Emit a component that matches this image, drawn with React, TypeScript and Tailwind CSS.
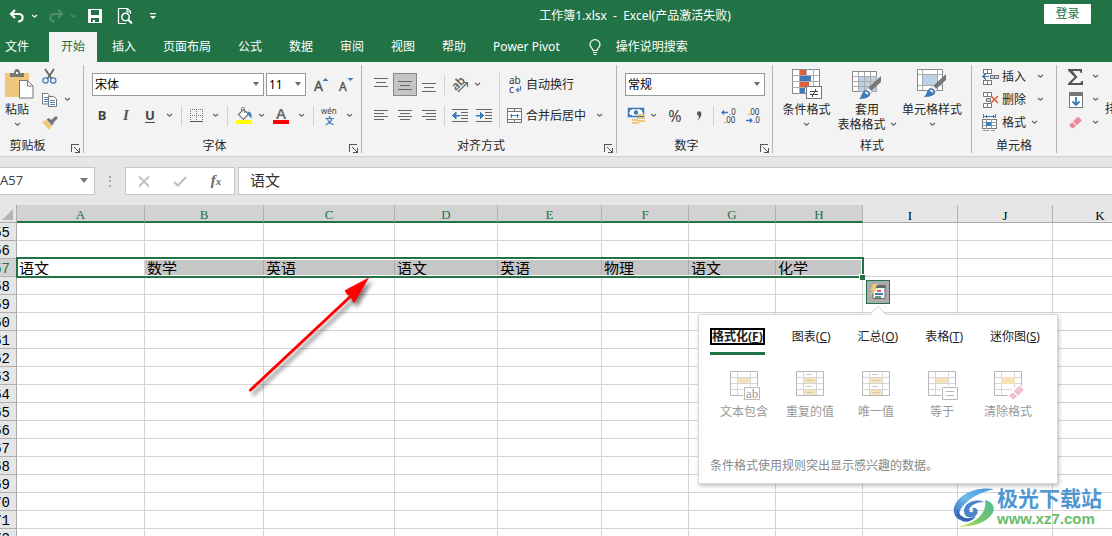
import React from "react";

type Kids = { children?: React.ReactNode };

/* ---------- small building blocks ---------- */

function Svg({ w, h, children, crisp = false }: Kids & { w: number; h: number; crisp?: boolean }) {
  return (
    <svg
      width={w}
      height={h}
      viewBox={`0 0 ${w} ${h}`}
      fill="none"
      className="shrink-0 overflow-visible"
      aria-hidden="true"
      shapeRendering={crisp ? "crispEdges" : "auto"}
    >
      {children}
    </svg>
  );
}

function Chevron() {
  return (
    <Svg w={7} h={5}>
      <path d="M1 1l2.500 2.300L6 1" stroke="#666" strokeWidth="1.200" />
    </Svg>
  );
}

function Tool({ label, className = "w-6", children }: Kids & { label: string; className?: string }) {
  return (
    <button type="button" aria-label={label} className={`flex h-[23px] shrink-0 items-center justify-center ${className}`}>
      {children}
    </button>
  );
}

function Divider() {
  return <span className="h-5 w-px shrink-0 bg-[#d0d0d0]" />;
}

function Combo({ label, value, className }: { label: string; value: string; className: string }) {
  return (
    <div className={`relative h-[23px] shrink-0 border border-[#999] bg-white ${className}`}>
      <select aria-label={label} defaultValue={value} className="h-full w-full appearance-none bg-transparent pl-[2px] leading-5 text-black outline-none">
        <option>{value}</option>
      </select>
      <span className="pointer-events-none absolute right-1 top-2">
        <Svg w={6} h={4}>
          <path d="M0 0h6L3 4z" fill="#666" />
        </Svg>
      </span>
    </div>
  );
}

function Group({
  title,
  className,
  labelPad = "pr-4",
  launcher = true,
  children,
}: Kids & { title: string; className: string; labelPad?: string; launcher?: boolean }) {
  return (
    <section aria-label={title} className={`flex shrink-0 flex-col border-r border-[#b5b5b5] ${className}`}>
      <div className="h-[74px]">{children}</div>
      <div className={`relative flex h-[14px] items-center justify-center leading-[14px] ${labelPad}`}>
        {title}
        {launcher && (
          <button type="button" aria-label={`${title}设置`} className="absolute bottom-0 right-[3px]">
            <Svg w={9} h={9} crisp>
              <path d="M0.5 8V0.5H8M3 3l5 5M8.500 4v4.500H4" stroke="#555" />
            </Svg>
          </button>
        )}
      </div>
    </section>
  );
}

/* ---------- ribbon icons ---------- */

const PasteIcon = () => (
  <Svg w={29} h={30}>
    <path d="M0 4h24v24H0z" fill="#eec67c" />
    <path d="M5 4h4c0-2 1-4 3-4s3 2 3 4h4v4H5z" fill="#777" />
    <path d="M11 3h2v2h-2z" fill="#f3f3f3" />
    <path d="M14.500 11.500h8l5.500 5.500v12H14.500z" fill="#fff" stroke="#777" />
    <path d="M22.500 11.500V17H28" stroke="#777" />
  </Svg>
);

const CutIcon = () => (
  <Svg w={15} h={15}>
    <path d="M3 0l6.500 9.500M12 0L5.500 9.500" stroke="#666" strokeWidth="1.800" />
    <circle cx="3.500" cy="11.500" r="2.700" stroke="#4a7ebb" strokeWidth="1.300" />
    <circle cx="11.200" cy="11.500" r="2.700" stroke="#4a7ebb" strokeWidth="1.300" />
  </Svg>
);

const CopyIcon = () => (
  <Svg w={15} h={14}>
    <path d="M.5.5h5l2.500 2.500v8H.5z" fill="#fff" stroke="#777" />
    <path d="M2 4.500h4M2 6.500h4M2 8.500h4" stroke="#4a7ebb" />
    <path d="M6.500 3.500h5L14.500 6v7.500h-8z" fill="#fff" stroke="#777" />
    <path d="M8 7.500h5M8 9.500h5M8 11.500h5" stroke="#4a7ebb" />
  </Svg>
);

const BrushIcon = () => (
  <Svg w={16} h={14}>
    <path d="M0 6l4-2 6 6-3 4z" fill="#eec67c" />
    <path d="M4.500 3.500L7 2l5 5-2 2.500z" fill="#777" />
    <path d="M8.500 4.500L14 0l2 2-5 5z" fill="#777" />
  </Svg>
);

const GrowFont = ({ down = false }: { down?: boolean }) => (
  <Svg w={15} h={17}>
    <text x="0" y="15" fontFamily="Noto Sans" fontSize={down ? 12 : 14} fill="#555" stroke="#555" strokeWidth=".4">
      A
    </text>
    <path d={down ? "M8.500 2h6l-3 3z" : "M8.500 5h6l-3-3z"} fill="#3f7ab8" />
  </Svg>
);

const BorderIcon = () => (
  <Svg w={13} h={14} crisp>
    <path d="M0 .5h13M0 6.500h13M.5 0v12M6.500 0v12M12.500 0v12" stroke="#777" strokeDasharray="1 1" />
    <path d="M0 12.500h13" stroke="#555" />
  </Svg>
);

const FillIcon = () => (
  <Svg w={16} h={17}>
    <path d="M2.500 7.500l5-5 5 4.500-5 5.500z" fill="#fff" stroke="#777" strokeWidth="1.200" />
    <path d="M5.500 5V1.500c0-1.500 3-1.500 3 0V6" stroke="#777" />
    <path d="M11.500 4.500c4 0 4.500 3 4 7-1.500-1-2-3-4-3.500z" fill="#4a7ebb" />
    <path d="M0 13h16v4H0z" fill="#ff0" />
  </Svg>
);

const FontColorIcon = () => (
  <Svg w={16} h={17}>
    <text x="3" y="12" fontFamily="Noto Sans" fontSize="15" fontWeight="600" fill="#666">
      A
    </text>
    <path d="M0 13h16v4H0z" fill="#f00" />
  </Svg>
);

const PinyinIcon = () => (
  <Svg w={17} h={18}>
    <text x="0" y="7" fontFamily="Noto Sans" fontSize="8" fill="#444">
      wén
    </text>
    <text x="4" y="17" fontFamily="Noto Sans CJK SC" fontSize="9" fontWeight="700" fill="#3f7ab8">
      文
    </text>
  </Svg>
);

function Lines({ rows }: { rows: [number, number, number][] }) {
  return (
    <Svg w={14} h={14} crisp>
      {rows.map(([x, y, len]) => (
        <path key={y} d={`M${x} ${y}.5h${len}`} stroke="#666" />
      ))}
    </Svg>
  );
}

const OrientIcon = () => (
  <Svg w={17} h={16}>
    <text x="0" y="11" fontFamily="Noto Sans" fontSize="12" fontWeight="600" fill="#666" transform="rotate(-45 6 8)">
      ab
    </text>
    <path d="M6 15l9-9M11 5.500h4.500V10" stroke="#666" strokeWidth="1.200" />
  </Svg>
);

const IndentIcon = ({ right = false }: { right?: boolean }) => (
  <Svg w={16} h={13} crisp>
    <path d="M0 .5h16M9 3.500h7M9 6.500h7M9 9.500h7M0 12.500h16" stroke="#666" />
    <path d={right ? "M0 6h4V3l4 3.500L4 10V7H0z" : "M8 6H4V3L0 6.500 4 10V7h4z"} fill="#3f7ab8" stroke="#3f7ab8" strokeWidth=".5" />
  </Svg>
);

const WrapIcon = () => (
  <Svg w={12} h={18}>
    <text x="0" y="8" fontFamily="Noto Sans" fontSize="10" fill="#333">
      ab
    </text>
    <text x="0" y="17" fontFamily="Noto Sans" fontSize="10" fill="#333">
      c
    </text>
    <path d="M11.500 10v4H7.500M9.500 12l-2 2 2 2" stroke="#3f7ab8" strokeWidth="1.200" />
  </Svg>
);

const MergeIcon = () => (
  <Svg w={15} h={15} crisp>
    <path d="M.5.5h14v14H.5zM0 3.500h15M0 11.500h15M7.500 0v4M7.500 11v4" stroke="#777" />
    <path d="M1 4h13v7H1z" fill="#fff" />
    <path d="M3 7.500h9M4.500 5.500v4M10.500 5.500v4" stroke="#3f7ab8" />
  </Svg>
);

const MoneyIcon = () => (
  <Svg w={18} h={17}>
    <path d="M.5 1.500h15v8H.5z" fill="#fff" stroke="#3f7ab8" strokeWidth="1.500" />
    <path d="M0 1h4v2H2v2H0zM12 1h4v4h-2V3h-2zM0 7h2v1h2v2H0z" fill="#3f7ab8" />
    <circle cx="8" cy="5.500" r="2.200" fill="#3f7ab8" />
    <path d="M10 7h7v2h-7zM9 10h8v2H9zM4 12h6v2H4zM10 13h7v2h-7zM4 15h7v2H4z" fill="#eec67c" />
  </Svg>
);

const DecimalIcon = ({ less = false }: { less?: boolean }) => (
  <Svg w={15} h={16}>
    <text x={less ? 2 : 7} y="7" fontFamily="Noto Sans" fontSize="8" fill="#333">
      {less ? ".00" : ".0"}
    </text>
    <text x={less ? 7 : 2} y="15" fontFamily="Noto Sans" fontSize="8" fill="#333">
      {less ? ".0" : ".00"}
    </text>
    <path d={less ? "M0 12.500h6M4 10.500l2 2-2 2" : "M6 4.500H0M2 2.500l-2 2 2 2"} stroke="#3f7ab8" strokeWidth="1.300" />
  </Svg>
);

const CondIcon = () => (
  <Svg w={30} h={31} crisp>
    <path d="M.5.5h27v24H.5z" fill="#fff" stroke="#888" />
    <path d="M0 6.500h27M0 12.500h27M0 18.500h27M7.500 0v25M14.500 0v25M21.500 0v25" stroke="#aaa" />
    <path d="M8 1h6v5H8zM8 13h9v5H8z" fill="#e0603c" />
    <path d="M8 7h11v5H8zM8 19h5v5H8z" fill="#3f7ab8" />
    <path d="M14.500 17.500h15v12h-15z" fill="#fff" stroke="#777" />
    <path d="M18 22.500h8M18 25.500h8M24 20l-4 8" stroke="#444" />
  </Svg>
);

const StyleBrush = () => (
  <>
    <path d="M29 5v6L19 20l-3-3z" fill="#777" />
    <path d="M16 16.500l4 4-2 2.500-4.500-3.500z" fill="#fff" stroke="#999" strokeWidth=".6" />
    <path d="M12.500 19.500c3.500-1 6 1.500 5.500 4.500-1.500 3.500-7 4-11 4 2.500-1.500 2.500-6.500 5.500-8.500z" fill="#3f7ab8" />
    <path d="M13 21.500c1.500-.3 2.700.8 2.500 2" stroke="#fff" strokeWidth="1.500" />
  </>
);

const TableStyleIcon = () => (
  <Svg w={30} h={29}>
    <path d="M.5.500h24v20H.5z" fill="#fff" stroke="#888" />
    <path d="M7 5h17.500v15.500H7z" fill="#bcd0e8" />
    <path d="M.5 5.500h24M.5 10.500h24M.5 15.500h24M6.500.5v20M12.500.5v20M18.500.5v20" stroke="#aaa" />
    <StyleBrush />
  </Svg>
);

const CellStyleIcon = () => (
  <Svg w={30} h={29}>
    <path d="M.5.500h25v21H.5z" fill="#fff" stroke="#888" />
    <path d="M6 6h14v10H6z" fill="#bcd0e8" />
    <path d="M.5 5.500h25M.5 16.500h25M5.500.5v21M20.500.5v21" stroke="#aaa" />
    <StyleBrush />
  </Svg>
);

const InsertIcon = () => (
  <Svg w={17} h={16} crisp>
    <path d="M1.500.5h8v4h-8zM5.500.5v4M1.500 11.500h8v4h-8zM5.500 11.500v4" fill="#fff" stroke="#777" />
    <path d="M8.500 6.500h8v3h-8zM12.500 6.500v3" fill="#bcd0e8" stroke="#777" />
    <path d="M7 7.500H1M4 5L1 7.500 4 10" stroke="#3f7ab8" strokeWidth="1.500" />
  </Svg>
);

const DeleteIcon = () => (
  <Svg w={17} h={16}>
    <path d="M1.500.5h8v4h-8zM5.500.5v4M1.500 11.500h8v4h-8zM5.500 11.500v4" fill="#fff" stroke="#777" />
    <path d="M4.500 6.500h4v3h-4z" fill="#bcd0e8" stroke="#777" />
    <path d="M9 4l7 7M16 4l-7 7" stroke="#e0603c" strokeWidth="1.700" />
  </Svg>
);

const FormatIcon = () => (
  <Svg w={16} h={17} crisp>
    <path d="M1.500 0v4M13.500 0v4M2 2.500h11M4 1v3M11 1v3" stroke="#3f7ab8" />
    <path d="M.5 5.500h14v9H.5z" fill="#fff" stroke="#777" />
    <path d="M0 8.500h15M0 11.500h15M4.500 5v10M9.500 5v10M1 16.500h6M9 16.500h4" stroke="#999" />
    <path d="M4 8h5v4H4z" fill="#3f7ab8" />
  </Svg>
);

const EraserShape = ({ color }: { color: string }) => (
  <>
    <path d="M4 5.500L9 .700l4 3.600-5 5z" fill={color} />
    <path d="M3.200 6.300L0 9.300 3.500 12.500l3.800-2.600z" fill={color} />
  </>
);

/* ---------- ribbon ---------- */

function ClipboardGroup() {
  return (
    <Group title="剪贴板" className="w-[84px]" labelPad="pr-7">
      <div className="flex">
        <button type="button" className="flex w-[38px] flex-col items-center pt-1">
          <PasteIcon />
          <span className="mr-1 pt-[3px] leading-4">粘贴</span>
          <span className="mr-1 flex h-3 items-center">
            <Chevron />
          </span>
        </button>
        <div className="flex flex-col">
          <Tool label="剪切" className="w-[22px]">
            <CutIcon />
          </Tool>
          <div className="flex">
            <Tool label="复制" className="w-[22px]">
              <CopyIcon />
            </Tool>
            <Tool label="复制选项" className="w-[14px]">
              <Chevron />
            </Tool>
          </div>
          <Tool label="格式刷" className="w-[24px]">
            <BrushIcon />
          </Tool>
        </div>
      </div>
    </Group>
  );
}

function FontGroup() {
  return (
    <Group title="字体" className="w-[278px]">
      <div className="flex flex-col gap-2 pl-2 pt-2">
        <div className="flex items-center">
          <Combo label="字体" value="宋体" className="w-[172px]" />
          <span className="w-[2px]" />
          <Combo label="字号" value="11" className="w-10" />
          <Tool label="增大字号" className="w-[31px]">
            <GrowFont />
          </Tool>
          <Tool label="减小字号" className="w-[18px]">
            <GrowFont down />
          </Tool>
        </div>
        <div className="flex items-center">
          <Tool label="加粗" className="w-5">
            <b className="text-[13px] text-[#444]">B</b>
          </Tool>
          <Tool label="倾斜" className="w-7">
            <i className="font-['Liberation_Serif',serif] text-[15px] font-bold text-[#555]">I</i>
          </Tool>
          <Tool label="下划线" className="w-5">
            <b className="text-[13px] text-[#444] underline underline-offset-2">U</b>
          </Tool>
          <Tool label="下划线选项" className="w-[18px]">
            <Chevron />
          </Tool>
          <span className="w-[3px]" />
          <Divider />
          <Tool label="边框" className="w-[29px]">
            <BorderIcon />
          </Tool>
          <Tool label="边框选项" className="w-2">
            <Chevron />
          </Tool>
          <span className="w-2" />
          <Divider />
          <Tool label="填充颜色" className="w-[31px]">
            <FillIcon />
          </Tool>
          <Tool label="填充颜色选项" className="w-1">
            <Chevron />
          </Tool>
          <Tool label="字体颜色" className="w-9">
            <FontColorIcon />
          </Tool>
          <Tool label="字体颜色选项" className="w-1">
            <Chevron />
          </Tool>
          <span className="w-[10px]" />
          <Divider />
          <Tool label="拼音" className="w-[31px]">
            <PinyinIcon />
          </Tool>
          <Tool label="拼音选项" className="w-2">
            <Chevron />
          </Tool>
        </div>
      </div>
    </Group>
  );
}

function AlignGroup() {
  return (
    <Group title="对齐方式" className="w-[255px]">
      <div className="flex pt-2">
        <div className="flex flex-col gap-2 pl-[7px]">
          <div className="flex">
            <Tool label="顶端对齐">
              <Lines rows={[[0, 0, 14], [2, 4, 10], [0, 8, 14]]} />
            </Tool>
            <Tool label="垂直居中" className="w-6 border border-[#888] bg-[#c5c5c5]">
              <Lines rows={[[0, 3, 14], [2, 7, 10], [0, 11, 14]]} />
            </Tool>
            <Tool label="底端对齐">
              <Lines rows={[[0, 5, 14], [2, 9, 10], [0, 13, 14]]} />
            </Tool>
          </div>
          <div className="flex">
            <Tool label="左对齐">
              <Lines rows={[[0, 1, 14], [0, 4, 10], [0, 7, 14], [0, 10, 10]]} />
            </Tool>
            <Tool label="居中">
              <Lines rows={[[0, 1, 14], [2, 4, 10], [0, 7, 14], [2, 10, 10]]} />
            </Tool>
            <Tool label="右对齐">
              <Lines rows={[[0, 1, 14], [4, 4, 10], [0, 7, 14], [4, 10, 10]]} />
            </Tool>
          </div>
        </div>
        <div className="ml-[3px] flex w-[55px] flex-col gap-2">
          <div className="flex items-center">
            <Divider />
            <Tool label="方向" className="w-[30px]">
              <OrientIcon />
            </Tool>
            <Tool label="方向选项" className="w-1">
              <Chevron />
            </Tool>
          </div>
          <div className="flex items-center">
            <Divider />
            <Tool label="减少缩进量" className="w-[30px]">
              <IndentIcon />
            </Tool>
            <Tool label="增加缩进量" className="w-[18px]">
              <IndentIcon right />
            </Tool>
          </div>
        </div>
        <span className="h-[55px] w-px bg-[#d0d0d0]" />
        <div className="flex flex-col gap-2 pl-[7px]">
          <button type="button" className="flex h-[23px] items-center gap-[5px] pl-[2px]">
            <WrapIcon />
            自动换行
          </button>
          <button type="button" className="flex h-[23px] items-center gap-1">
            <MergeIcon />
            合并后居中
            <span className="pl-[6px]">
              <Chevron />
            </span>
          </button>
        </div>
      </div>
    </Group>
  );
}

function NumberGroup() {
  return (
    <Group title="数字" className="w-[156px]">
      <div className="flex flex-col gap-2 pl-2 pt-2">
        <Combo label="数字格式" value="常规" className="w-[140px]" />
        <div className="flex items-center">
          <Tool label="会计数字格式" className="w-[24px]">
            <MoneyIcon />
          </Tool>
          <Tool label="会计数字格式选项" className="w-2">
            <Chevron />
          </Tool>
          <Tool label="百分比样式" className="w-[36px]">
            <span className="text-base text-[#444]">%</span>
          </Tool>
          <Tool label="千位分隔样式" className="w-3">
            <Svg w={6} h={10}>
              <path d="M1 2.500a2.200 2.200 0 1 1 4.400 0C5.400 6 3.500 8 1 9.500c1-1.500 2-2.500 2-4.600A2.300 2.300 0 0 1 1 2.500z" fill="#555" />
            </Svg>
          </Tool>
          <span className="w-2" />
          <Divider />
          <Tool label="增加小数位数" className="w-[30px]">
            <DecimalIcon />
          </Tool>
          <Tool label="减少小数位数" className="w-[18px]">
            <DecimalIcon less />
          </Tool>
        </div>
      </div>
    </Group>
  );
}

function StylesGroup() {
  return (
    <Group title="样式" className="w-[199px]" labelPad="pr-0" launcher={false}>
      <div className="flex pl-[5px] pt-1 leading-[15px]">
        <button type="button" className="flex w-[57px] flex-col items-center">
          <CondIcon />
          <span className="mt-[2px]">条件格式</span>
          <span className="flex h-[15px] items-center">
            <Chevron />
          </span>
        </button>
        <button type="button" className="flex w-[64px] flex-col items-center pt-[2px]">
          <TableStyleIcon />
          <span className="mt-[2px]">套用</span>
          <span className="flex items-center gap-1 whitespace-nowrap">
            表格格式
            <Chevron />
          </span>
        </button>
        <button type="button" className="flex w-[66px] flex-col items-center">
          <CellStyleIcon />
          <span className="mt-1">单元格样式</span>
          <span className="flex h-[15px] items-center">
            <Chevron />
          </span>
        </button>
      </div>
    </Group>
  );
}

function CellsGroup() {
  const rows = [
    { name: "插入", icon: <InsertIcon />, gap: "pl-[11px]" },
    { name: "删除", icon: <DeleteIcon />, gap: "pl-[11px]" },
    { name: "格式", icon: <FormatIcon />, gap: "pl-[5px]" },
  ];
  return (
    <Group title="单元格" className="w-[85px]" labelPad="pr-0" launcher={false}>
      <div className="flex flex-col pl-[10px]">
        {rows.map((r) => (
          <button key={r.name} type="button" className="flex h-[23px] items-center">
            <span className="flex w-5 items-center">{r.icon}</span>
            {r.name}
            <span className={r.gap}>
              <Chevron />
            </span>
          </button>
        ))}
      </div>
    </Group>
  );
}

function EditGroup() {
  return (
    <section aria-label="编辑" className="flex shrink-0 items-start pl-[9px]">
      <div className="flex w-[33px] flex-col">
        <button type="button" aria-label="自动求和" className="flex h-[23px] items-center justify-between pl-[2px]">
          <Svg w={15} h={16}>
            <path d="M0 0h14v4h-1.500c0-1.500-.5-2-2-2H4.500L9.500 8l-6 6h7.500c1.500 0 2-.5 2.500-2H15v4H0v-1.500L6.500 8 0 1.500z" fill="#555" />
          </Svg>
          <Chevron />
        </button>
        <button type="button" aria-label="填充" className="flex h-[23px] items-center justify-between pl-[3px]">
          <Svg w={14} h={16} crisp>
            <path d="M.5.500h13v15H.5z" fill="#fff" stroke="#777" />
            <path d="M0 0h14v4H0z" fill="#777" />
            <path d="M7 5v8M3.500 9.500L7 13l3.500-3.500" stroke="#3f7ab8" strokeWidth="1.800" shapeRendering="auto" />
          </Svg>
          <Chevron />
        </button>
        <button type="button" aria-label="清除" className="flex h-[23px] items-center justify-between pl-[3px]">
          <Svg w={14} h={13}>
            <EraserShape color="#e8899b" />
          </Svg>
          <Chevron />
        </button>
      </div>
      <button type="button" className="ml-[6px] whitespace-nowrap pt-9 leading-4">
        排序和筛选
      </button>
    </section>
  );
}

/* ---------- title bar and tabs ---------- */

function TitleBar() {
  return (
    <div className="flex h-8 text-white">
      <div className="flex w-[158px] shrink-0 items-center pl-[9px]">
        <button type="button" aria-label="撤消" className="flex items-center gap-[6px]">
          <Svg w={16} h={14}>
            <path d="M6 1L2 5l4 4M2.500 5H10c5 0 5 7.500-1 7.500" stroke="#fff" strokeWidth="2.200" />
          </Svg>
          <Svg w={7} h={5}>
            <path d="M1 1l2.500 2L6 1" stroke="#fff" strokeWidth="1.200" />
          </Svg>
        </button>
        <button type="button" aria-label="恢复" disabled className="ml-[10px] flex items-center gap-[6px]">
          <Svg w={16} h={14}>
            <path d="M10 1l4 4-4 4M13.500 5H6C1 5 1 12.500 7 12.500" stroke="#4d9069" strokeWidth="2" />
          </Svg>
          <Svg w={7} h={5}>
            <path d="M1 1l2.500 2L6 1" stroke="#4d9069" strokeWidth="1.200" />
          </Svg>
        </button>
        <button type="button" aria-label="保存" className="ml-[11px]">
          <Svg w={14} h={14} crisp>
            <path d="M0 0h14v14H0z" fill="#fff" />
            <path d="M3 1h8v5H3zM3 9h8v4H3z" fill="#217346" />
            <path d="M5 11h2v2H5z" fill="#fff" />
          </Svg>
        </button>
        <button type="button" aria-label="打印预览" className="ml-4">
          <Svg w={15} h={16}>
            <path d="M12.500 6V3.500l-3-3H.5v15H8M9 .5V4h3.500" stroke="#fff" strokeWidth="1.200" />
            <circle cx="7.500" cy="9" r="3.700" stroke="#fff" strokeWidth="1.500" />
            <path d="M10 11.500l4 4" stroke="#fff" strokeWidth="2" />
          </Svg>
        </button>
        <button type="button" aria-label="自定义快速访问工具栏" className="ml-[17px]">
          <Svg w={6} h={7}>
            <path d="M0 0h6v1.200H0zM0 3h6L3 6z" fill="#fff" />
          </Svg>
        </button>
      </div>
      <div className="grid flex-1 grid-cols-[1fr_auto_1fr] items-center">
        <span />
        <h1 className="whitespace-pre">{"工作簿1.xlsx  -  Excel(产品激活失败)"}</h1>
        <button type="button" className="mb-1 mr-[21px] h-5 w-[47px] justify-self-end rounded-[1px] bg-white leading-5 text-[#217346]">
          登录
        </button>
      </div>
    </div>
  );
}

const tabs = ["插入", "页面布局", "公式", "数据", "审阅", "视图", "帮助", "Power Pivot"];

function RibbonTabs() {
  return (
    <nav className="flex h-[30px] items-stretch gap-[3px] whitespace-nowrap text-white">
      <button type="button" className="w-[46px] pr-3 leading-[28px]">
        文件
      </button>
      <button type="button" aria-current="page" className="w-12 bg-[#f3f3f3] leading-[28px] text-[#217346]">
        开始
      </button>
      {tabs.map((t) => (
        <button key={t} type="button" className="px-3 leading-[28px]">
          {t}
        </button>
      ))}
      <button type="button" className="ml-[14px] flex items-center gap-[15px] leading-[28px]">
        <Svg w={12} h={16}>
          <path d="M4 11.500C4 9.500 1 8.500 1 5.500a5 4.800 0 0 1 10 0C11 8.500 8 9.500 8 11.500zM4 13.500h4M4.500 15.500h3" stroke="#fff" strokeWidth="1.200" />
        </Svg>
        操作说明搜索
      </button>
    </nav>
  );
}

/* ---------- formula bar ---------- */

function FormulaBar() {
  return (
    <div className="flex h-12 shrink-0 items-center bg-[#e6e6e6]">
      <div className="relative flex h-7 w-[95px] items-center border border-l-0 border-[#c6c6c6] bg-white">
        <input aria-label="名称框" defaultValue="A57" className="w-full bg-transparent text-[13px] text-[#444] outline-none" />
        <span className="absolute right-[6px] top-[10px]">
          <Svg w={8} h={5}>
            <path d="M0 0h8L4 5z" fill="#777" />
          </Svg>
        </span>
      </div>
      <div className="flex w-[30px] justify-center">
        <Svg w={2} h={11} crisp>
          <path d="M0 0h2v2H0zM0 4h2v2H0zM0 9h2v2H0z" fill="#a5a5a5" />
        </Svg>
      </div>
      <div className="flex h-7 w-[110px] items-center border border-[#c6c6c6] bg-white">
        <Tool label="取消" className="w-9">
          <Svg w={12} h={11}>
            <path d="M1 .5l10 10M11 .5l-10 10" stroke="#c0c0c0" strokeWidth="1.800" />
          </Svg>
        </Tool>
        <Tool label="输入" className="w-9">
          <Svg w={14} h={11}>
            <path d="M1 6l4 3.500L13 1" stroke="#c0c0c0" strokeWidth="2.200" />
          </Svg>
        </Tool>
        <Tool label="插入函数" className="w-9">
          <i className="font-['Liberation_Serif',serif] text-[15px] font-bold text-[#666]">
            f<span className="text-[11px]">x</span>
          </i>
        </Tool>
      </div>
      <input
        aria-label="编辑栏"
        defaultValue="语文"
        className="ml-[3px] h-7 min-w-0 flex-1 border border-r-0 border-[#c6c6c6] bg-white pb-1 pl-[11px] text-[15px] text-[#333] outline-none"
      />
    </div>
  );
}

/* ---------- worksheet ---------- */

const columns = [
  { name: "A", width: "w-[128px]", value: "语文" },
  { name: "B", width: "w-[119px]", value: "数学" },
  { name: "C", width: "w-[131px]", value: "英语" },
  { name: "D", width: "w-[103px]", value: "语文" },
  { name: "E", width: "w-[104px]", value: "英语" },
  { name: "F", width: "w-[87px]", value: "物理" },
  { name: "G", width: "w-[87px]", value: "语文" },
  { name: "H", width: "w-[87px]", value: "化学" },
  { name: "I", width: "w-[95px]", value: "" },
  { name: "J", width: "w-[95px]", value: "" },
  { name: "K", width: "w-[95px]", value: "" },
];
const SELECTED_ROW = 57;
const rowNumbers = Array.from({ length: 18 }, (_, i) => 55 + i);

function Sheet() {
  return (
    <table className="w-[1148px] table-fixed border-separate border-spacing-0 text-[15px] text-black">
      <colgroup>
        <col className="w-[17px]" />
        {columns.map((c) => (
          <col key={c.name} className={c.width} />
        ))}
      </colgroup>
      <thead>
        <tr className="h-[18px] font-['Liberation_Serif',serif] text-[13px] leading-[13px]">
          <td className="border-b border-r border-[#ababab] bg-[#e6e6e6] p-0">
            <svg width="11" height="11" viewBox="0 0 11 11" className="ml-[2px] mt-[2px] block" aria-hidden="true">
              <path d="M11 0v11H0z" fill="#b5b5b5" />
            </svg>
          </td>
          {columns.map((c) => (
            <th
              key={c.name}
              scope="col"
              className={
                c.value
                  ? "border-b-2 border-r border-b-[#217346] border-r-[#b0b0b0] bg-[#d2d2d2] p-0 pt-[3px] font-normal text-[#217346]"
                  : "border-b border-r border-b-[#ababab] border-r-[#b0b0b0] bg-[#e6e6e6] p-0 pt-[3px] font-normal"
              }
            >
              {c.name}
            </th>
          ))}
        </tr>
      </thead>
      <tbody>
        {rowNumbers.map((n) => {
          const selected = n === SELECTED_ROW;
          return (
            <tr key={n} className="h-[18px] leading-[17px]">
              <th
                scope="row"
                className={
                  selected
                    ? "border-b border-r border-b-[#b0b0b0] border-r-[#ababab] bg-[#d2d2d2] p-0 font-normal text-[#217346]"
                    : "border-b border-r border-b-[#b0b0b0] border-r-[#ababab] bg-[#e6e6e6] p-0 font-normal"
                }
              >
                <div className="flex h-[17px] justify-end overflow-hidden pr-[6px] font-['Liberation_Mono',monospace] text-[14px] leading-[20px]">
                  {n}
                </div>
              </th>
              {columns.map((c) => (
                <td
                  key={c.name}
                  className={
                    selected && c.value && c.name !== "A"
                      ? "border-b border-r border-b-[#d4d4d4] border-r-[#a9a9a9] bg-[#c6c6c6] p-0 pl-[2px]"
                      : "border-b border-r border-[#d4d4d4] bg-white p-0 pl-[2px]"
                  }
                >
                  {selected && c.value ? <div className="h-[17px] leading-[18px]">{c.value}</div> : null}
                </td>
              ))}
            </tr>
          );
        })}
      </tbody>
    </table>
  );
}

/* ---------- quick analysis ---------- */

function PreviewTable({ fills }: { fills: string }) {
  return (
    <>
      <path d="M.5.500h27v24H.5z" fill="#fff" stroke="#b8b8b8" />
      <path d="M1 6.500h26M1 12.500h26M1 18.500h26M7.500 1v23M20.500 1v23" stroke="#d6d6d6" />
      <path d={fills} fill="#f6e3b8" />
    </>
  );
}

const actions = [
  {
    name: "文本包含",
    icon: (
      <Svg w={28} h={30}>
        <PreviewTable fills="M8 7h12v5H8z" />
        <path d="M13 15h17v15H13z" fill="#fff" />
        <path d="M14.500 16.500h15v12h-15z" fill="#fff" stroke="#b8b8b8" />
        <text x="16" y="27" fontFamily="Liberation Serif" fontSize="13" fill="#999">
          ab
        </text>
      </Svg>
    ),
  },
  {
    name: "重复的值",
    icon: (
      <Svg w={28} h={30}>
        <PreviewTable fills="M8 7h12v5H8zM8 19h12v5H8z" />
        <path d="M10 3.500h6M10 9.500h7M10 15.500h6M10 21.500h7" stroke="#cfc9b8" />
      </Svg>
    ),
  },
  {
    name: "唯一值",
    icon: (
      <Svg w={28} h={30}>
        <PreviewTable fills="M8 7h12v5H8zM8 19h12v5H8z" />
        <path d="M10 3.500h6M10 9.500h7M10 15.500h6M10 21.500h7" stroke="#cfc9b8" />
      </Svg>
    ),
  },
  {
    name: "等于",
    icon: (
      <Svg w={28} h={30}>
        <PreviewTable fills="M8 7h12v5H8z" />
        <path d="M13 15h17v15H13z" fill="#fff" />
        <path d="M14.500 16.500h15v12h-15zM18 20.500h8M18 24.500h8" stroke="#b8b8b8" />
      </Svg>
    ),
  },
  {
    name: "清除格式",
    icon: (
      <Svg w={28} h={30}>
        <PreviewTable fills="M7 6h14v7H7z" />
        <path d="M13 23l11-10 6 4v13H15z" fill="#fff" />
        <g transform="translate(15 14) scale(1.15)">
          <EraserShape color="#f3c0cc" />
        </g>
      </Svg>
    ),
  },
];

const panelTabs = [
  { name: "图表", key: "C" },
  { name: "汇总", key: "O" },
  { name: "表格", key: "T" },
  { name: "迷你图", key: "S" },
];

function QuickAnalysis() {
  return (
    <>
      <button
        type="button"
        aria-label="快速分析"
        className="absolute left-[866px] top-[75px] flex h-6 w-6 items-center justify-center border border-[#217346] bg-[#ababab]"
      >
        <Svg w={18} h={18}>
          <path d="M4 2.500h12v13H4z" fill="#fff" stroke="#666" />
          <path d="M4 2h12.500v3H4z" fill="#666" />
          <path d="M8 7h4v2H8z" fill="#e0603c" />
          <path d="M6 10h8v2H6z" fill="#3f7ab8" />
          <path d="M6 13h6v2H6z" fill="#5a9e78" />
          <path d="M4 1h5L6.500 5H9L1 13l2.500-6H1z" fill="#eec67c" />
        </Svg>
      </button>
      <div className="absolute left-[698px] top-[109px] w-[360px] border border-[#d8d8d8] bg-white shadow-[1px_2px_4px_rgba(0,0,0,0.25)]">
        <span className="absolute -top-[9px] left-[170px]">
          <svg width="18" height="10" viewBox="0 0 18 10" className="block" aria-hidden="true">
            <path d="M0 10L9 1l9 9z" fill="#fff" />
            <path d="M0 9L9 .5 18 9" fill="none" stroke="#d4d4d4" />
          </svg>
        </span>
        <div className="flex items-start gap-[27px] whitespace-nowrap pl-[11px] pt-[13px] text-[#222]">
          <button type="button" className="border-b-[3px] border-[#217346] pb-[7px]">
            <span className="block border-2 border-black font-bold leading-[13px]">
              格式化(<u>F</u>)
            </span>
          </button>
          {panelTabs.map((t) => (
            <button key={t.key} type="button" className="leading-[18px]">
              {t.name}(<u>{t.key}</u>)
            </button>
          ))}
        </div>
        <div className="flex pl-3 pt-4 text-[#999]">
          {actions.map((a) => (
            <button key={a.name} type="button" className="flex w-[66px] flex-col items-center">
              {a.icon}
              <span className="mt-[2px] leading-[18px]">{a.name}</span>
            </button>
          ))}
        </div>
        <p className="pb-2 pl-[11px] pt-9 leading-[18px] text-[#888]">条件格式使用规则突出显示感兴趣的数据。</p>
      </div>
    </>
  );
}

function ArrowMark() {
  return (
    <svg width="136" height="130" viewBox="0 0 136 130" className="pointer-events-none absolute left-[244px] top-[68px]" aria-hidden="true">
      <g style={{ filter: "drop-shadow(3px 4px 2px rgba(0,0,0,.5))" }}>
        <path d="M6.500 117L108 22" stroke="#f00" strokeWidth="3" strokeLinecap="round" />
        <path d="M101 17.500L124.500 5L110 30l-3.500-6.500-4-3z" fill="#f00" stroke="#f00" strokeWidth=".6" />
      </g>
    </svg>
  );
}

function SiteMark() {
  return (
    <a href="#" className="absolute bottom-2 right-[10px] flex items-end gap-[2px] whitespace-nowrap">
      <svg width="42" height="40" viewBox="0 0 42 40" aria-hidden="true">
        <defs>
          <linearGradient id="swirlBlue" x1="1" y1="0" x2="0" y2="1">
            <stop offset="0" stopColor="#3f95dc" />
            <stop offset=".5" stopColor="#6dbbec" />
            <stop offset="1" stopColor="#3565b5" />
          </linearGradient>
          <linearGradient id="swirlGreen" x1="1" y1="0" x2="0" y2="1">
            <stop offset="0" stopColor="#4fb892" />
            <stop offset=".6" stopColor="#79c96a" />
            <stop offset="1" stopColor="#f0ec5a" />
          </linearGradient>
        </defs>
        <path d="M41 1C22-2 4 7 1 20c-1 6 2 10 6 12-2-7 0-12 6-17C20 8 29 4 41 1z" fill="url(#swirlBlue)" />
        <path d="M32 12c8 2 11 8 7 14C33 35 20 39 3 39c11-2 20-6 25-12 4-5 5-10 4-15z" fill="url(#swirlGreen)" />
        <path d="M31 14c-9-4-20 1-20 9 0 8 10 8 13 3 2-4-1-7-5-6 3 3 0 5-2 4-3-3 3-10 14-10z" fill="#4b83c9" />
        <path d="M5 20c0 9 9 13 18 8-3 5-10 7-14 5-5-3-6-8-4-13z" fill="#3565b5" />
      </svg>
      <span className="flex flex-col">
        <span className="text-[21px] font-bold leading-6 text-[#4f97d3]">极光下载站</span>
        <span className="font-['Liberation_Sans',sans-serif] text-[15px] font-bold leading-[18px] text-[#66bd69]">www.xz7.com</span>
      </span>
    </a>
  );
}

export default function App() {
  return (
    <div className="flex h-screen flex-col overflow-hidden bg-white font-['Noto_Sans','Noto_Sans_CJK_SC',sans-serif] text-xs text-[#262626]">
      <header className="shrink-0 bg-[#217346]">
        <TitleBar />
        <RibbonTabs />
      </header>
      <div className="flex shrink-0 overflow-hidden whitespace-nowrap border-b border-[#cfcfcf] bg-[#f3f3f3] pb-[3px] pt-[3px]">
        <ClipboardGroup />
        <FontGroup />
        <AlignGroup />
        <NumberGroup />
        <StylesGroup />
        <CellsGroup />
        <EditGroup />
      </div>
      <FormulaBar />
      <main className="relative min-h-0 flex-1 overflow-hidden">
        <Sheet />
        <div className="pointer-events-none absolute left-4 top-[52px] h-[21px] w-[848px] border-2 border-[#217346] ring-1 ring-inset ring-white">
          <span className="absolute -bottom-1 -right-[3px] h-[6px] w-[6px] border-l border-t border-white bg-[#217346]" />
        </div>
        <ArrowMark />
        <QuickAnalysis />
        <SiteMark />
      </main>
    </div>
  );
}
